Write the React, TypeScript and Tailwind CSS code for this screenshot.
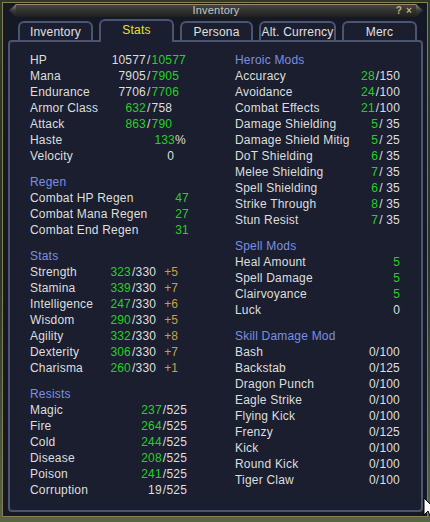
import type { ReactNode } from "react";

const green = "text-[#22d322]";
const gold = "text-[#c9a23c]";

function Header({ children, first }: { children: ReactNode; first?: boolean }) {
  return <div className={`h-4 leading-4 text-[#7c8ee4] ${first ? "" : "mt-[10px]"}`}>{children}</div>;
}

function Row({ label, children, className = "justify-between" }: { label: string; children: ReactNode; className?: string }) {
  return (
    <div className={`flex h-4 items-center leading-4 ${className}`}>
      <span className="shrink-0">{label}</span>
      <span className="flex">{children}</span>
    </div>
  );
}

const vitals = [
  { label: "HP", cur: "10577", max: "10577", curGreen: false, maxGreen: true },
  { label: "Mana", cur: "7905", max: "7905", curGreen: false, maxGreen: true },
  { label: "Endurance", cur: "7706", max: "7706", curGreen: false, maxGreen: true },
  { label: "Armor Class", cur: "632", max: "758", curGreen: true, maxGreen: false },
  { label: "Attack", cur: "863", max: "790", curGreen: true, maxGreen: true },
];

const regen = [
  ["Combat HP Regen", "47"],
  ["Combat Mana Regen", "27"],
  ["Combat End Regen", "31"],
];

const stats = [
  ["Strength", "323", "+5"],
  ["Stamina", "339", "+7"],
  ["Intelligence", "247", "+6"],
  ["Wisdom", "290", "+5"],
  ["Agility", "332", "+8"],
  ["Dexterity", "306", "+7"],
  ["Charisma", "260", "+1"],
];

const resists = [
  ["Magic", "237", true],
  ["Fire", "264", true],
  ["Cold", "244", true],
  ["Disease", "208", true],
  ["Poison", "241", true],
  ["Corruption", "19", false],
] as const;

const heroic = [
  ["Accuracy", "28", "/150"],
  ["Avoidance", "24", "/100"],
  ["Combat Effects", "21", "/100"],
  ["Damage Shielding", "5", "/ 35"],
  ["Damage Shield Mitig", "5", "/ 25"],
  ["DoT Shielding", "6", "/ 35"],
  ["Melee Shielding", "7", "/ 35"],
  ["Spell Shielding", "6", "/ 35"],
  ["Strike Through", "8", "/ 35"],
  ["Stun Resist", "7", "/ 35"],
];

const spellMods = [
  ["Heal Amount", "5", true],
  ["Spell Damage", "5", true],
  ["Clairvoyance", "5", true],
  ["Luck", "0", false],
] as const;

const skills = [
  ["Bash", "0/100"],
  ["Backstab", "0/125"],
  ["Dragon Punch", "0/100"],
  ["Eagle Strike", "0/100"],
  ["Flying Kick", "0/100"],
  ["Frenzy", "0/125"],
  ["Kick", "0/100"],
  ["Round Kick", "0/100"],
  ["Tiger Claw", "0/100"],
];

const tabs = [
  { name: "Inventory", w: "w-[75px]" },
  { name: "Stats", w: "w-[75px]", active: true },
  { name: "Persona", w: "w-[73px]" },
  { name: "Alt. Currency", w: "w-[77px]" },
  { name: "Merc", w: "w-[75px]" },
];

export default function App() {
  return (
    <div className="relative h-[522px] w-[430px] overflow-hidden bg-linear-to-b from-[#2c3a2a] via-[#26322a] to-[#56654a] pt-[2px] pl-[2px] font-['Liberation_Sans',Arial,sans-serif] text-[12px] tracking-[0.2px] text-[#dedede]">
      {/* window frame */}
      <div className="flex h-[515px] w-[426px] flex-col border border-[#8a7e4e] bg-[#151925]">
        {/* title bar */}
        <div className="mt-[1px] ml-[6px] flex h-[13px] w-[414px] items-center justify-center bg-linear-to-b from-[#9a9076] via-[#3a3a38] to-[#1e1e1e] [clip-path:polygon(7px_0,calc(100%_-_7px)_0,100%_50%,calc(100%_-_7px)_100%,7px_100%,0_50%)]">
          <div className="relative flex h-[11px] w-[400px] items-center justify-center bg-linear-to-b from-[#444442] to-[#222222]">
            <span className="text-[11px] leading-none text-[#c6c6c6]">Inventory</span>
            <span className="absolute right-[4px] flex gap-[4px] text-[10px] leading-none font-bold text-[#bfb46a]">
              <span>?</span>
              <span>×</span>
            </span>
          </div>
        </div>

        {/* tabs */}
        <div className="relative z-10 mt-[2px] ml-[15px] flex h-[21px] items-end gap-[6px]">
          {tabs.map((t) =>
            t.active ? (
              <div
                key={t.name}
                className={`${t.w} -mb-[2px] flex h-[23px] items-center justify-center rounded-t-[6px] border-2 border-b-0 border-[#4c5570] bg-[#1a1e2f] pb-[3px] text-[#e6e22c]`}
              >
                {t.name}
              </div>
            ) : (
              <div
                key={t.name}
                className={`${t.w} flex h-[19px] items-center justify-center rounded-t-[6px] border-2 border-b-0 border-[#4c5570] bg-[#1a1e2f] pt-[1px] text-[#e0e0e0]`}
              >
                {t.name}
              </div>
            )
          )}
        </div>

        {/* content panel */}
        <div className="ml-[5px] flex h-[472px] w-[415px] rounded-[4px] border-2 border-[#4c5570] bg-[#1a1e2f] pt-[10px]">
          {/* left column */}
          <div className="w-[225px] pl-[20px]">
            {vitals.map((v) => (
              <div key={v.label} className="flex h-4 items-center leading-4">
                <span className="w-[78px] shrink-0">{v.label}</span>
                <span className={`w-[38px] text-right ${v.curGreen ? green : ""}`}>{v.cur}</span>
                <span className="px-[1px]">/</span>
                <span className={v.maxGreen ? green : ""}>{v.max}</span>
              </div>
            ))}
            <div className="flex h-4 items-center leading-4">
              <span className="w-[78px] shrink-0">Haste</span>
              <span className={`w-[67px] text-right ${green}`}>133</span>
              <span>%</span>
            </div>
            <div className="flex h-4 items-center leading-4">
              <span className="w-[78px] shrink-0">Velocity</span>
              <span className="w-[66px] text-right">0</span>
            </div>

            <Header>Regen</Header>
            <div className="w-[159px]">
              {regen.map(([l, v]) => (
                <Row key={l} label={l}>
                  <span className={green}>{v}</span>
                </Row>
              ))}
            </div>

            <Header>Stats</Header>
            {stats.map(([l, v, b]) => (
              <div key={l} className="flex h-4 items-center leading-4">
                <span className="w-[72px] shrink-0">{l}</span>
                <span className={`w-[29px] text-right ${green}`}>{v}</span>
                <span className="pl-[1px]">/330</span>
                <span className={`ml-[8px] ${gold}`}>{b}</span>
              </div>
            ))}

            <Header>Resists</Header>
            <div className="w-[157px]">
              {resists.map(([l, v, g]) => (
                <Row key={l} label={l}>
                  <span className={g ? green : ""}>{v}</span>
                  <span className="pl-[1px]">/525</span>
                </Row>
              ))}
            </div>
          </div>

          {/* right column */}
          <div className="w-[165px]">
            <Header first>Heroic Mods</Header>
            {heroic.map(([l, v, m]) => (
              <Row key={l} label={l}>
                <span className={green}>{v}</span>
                <span className="whitespace-pre pl-[1px]">{m}</span>
              </Row>
            ))}

            <Header>Spell Mods</Header>
            {spellMods.map(([l, v, g]) => (
              <Row key={l} label={l}>
                <span className={g ? green : ""}>{v}</span>
              </Row>
            ))}

            <Header>Skill Damage Mod</Header>
            {skills.map(([l, v]) => (
              <Row key={l} label={l}>
                <span>{v}</span>
              </Row>
            ))}
          </div>
        </div>
      </div>

      {/* mouse cursor */}
      <svg className="absolute top-[497px] left-[423px]" width="14" height="22" viewBox="0 0 14 22">
        <path d="M1 1 L1 18 L5 14 L8 21 L11 20 L8 13 L13 13 Z" fill="#fff" stroke="#000" strokeWidth="1" />
      </svg>
    </div>
  );
}
